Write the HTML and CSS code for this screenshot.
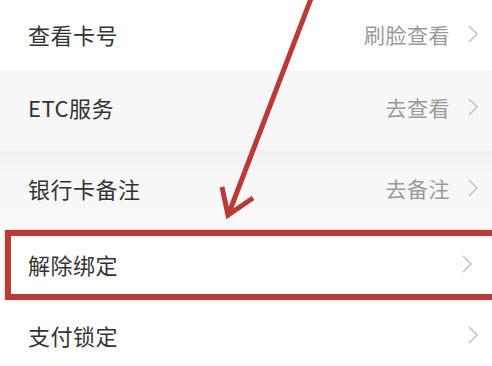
FILE: index.html
```html
<!DOCTYPE html>
<html lang="zh">
<head>
<meta charset="utf-8">
<link rel="stylesheet" href="styles.css">
</head>
<body>
<div class="screen">
  <ul class="menu">
    <li class="row row-1">
      <span class="label">查看卡号</span>
      <span class="action">刷脸查看</span>
      <svg class="chev" viewBox="0 0 12 20"><polyline points="2,2 10,10 2,18"/></svg>
    </li>
    <li class="row row-2 shaded">
      <span class="label">ETC服务</span>
      <span class="action">去查看</span>
      <svg class="chev" viewBox="0 0 12 20"><polyline points="2,2 10,10 2,18"/></svg>
    </li>
    <li class="row row-3 shaded">
      <span class="label">银行卡备注</span>
      <span class="action">去备注</span>
      <svg class="chev" viewBox="0 0 12 20"><polyline points="2,2 10,10 2,18"/></svg>
    </li>
    <li class="row row-4 highlighted">
      <span class="label">解除绑定</span>
      <span class="action"></span>
      <svg class="chev" viewBox="0 0 12 20"><polyline points="2,2 10,10 2,18"/></svg>
    </li>
    <li class="row row-5">
      <span class="label">支付锁定</span>
      <span class="action"></span>
      <svg class="chev" viewBox="0 0 12 20"><polyline points="2,2 10,10 2,18"/></svg>
    </li>
  </ul>
  <svg class="annotation" viewBox="0 0 492 366" width="492" height="366">
    <line x1="312" y1="-4" x2="229" y2="213" />
    <polyline points="222,187 228,215 253,198" />
  </svg>
</div>
</body>
</html>
```
FILE: styles.css
```css
html, body {
  margin: 0;
  padding: 0;
  background: #ffffff;
}
body {
  width: 492px;
  height: 366px;
  overflow: hidden;
  font-family: "Noto Sans CJK SC", "Noto Sans", sans-serif;
}
.screen {
  position: relative;
  width: 492px;
  height: 366px;
  overflow: hidden;
}
.menu {
  list-style: none;
  margin: 0;
  padding: 0;
  display: flex;
  flex-direction: column;
}
.row {
  display: flex;
  align-items: center;
  box-sizing: border-box;
  padding: 0 13px 0 28px;
  background: #ffffff;
}
.row-1 { height: 71px; padding-bottom: 4px; }
.row-2 { height: 79px; padding-bottom: 8px; }
.row-3 { height: 78px; padding-bottom: 2px; }
.row-4 { height: 72px; }
.row-5 { height: 70px; }
.shaded {
  background: #f7f7f7;
}
.row-3 {
  background: linear-gradient(#f1f1f1 0, #f7f7f7 22px, #f9f9f9 100%);
}
.highlighted {
  margin: 2px 0 0 5px;
  width: 510px;
  height: 70px;
  border: 6px solid #b93c36;
  box-shadow: 0 0 2px rgba(185, 60, 54, 0.5);
  padding-left: 17px;
  padding-right: 36px;
  padding-bottom: 2px;
  background: #ffffff;
}
.label {
  font-size: 22px;
  color: #333333;
  flex: 1;
  letter-spacing: 0.5px;
}
.action {
  font-size: 21px;
  color: #9a9a9a;
  margin-right: 17px;
  letter-spacing: 0.5px;
}
.chev {
  width: 12px;
  height: 20px;
  flex: none;
}
.chev polyline {
  fill: none;
  stroke: #c4c4c4;
  stroke-width: 1.6;
  stroke-linejoin: miter;
}
.annotation {
  position: absolute;
  top: 0;
  left: 0;
  pointer-events: none;
}
.annotation line,
.annotation polyline {
  fill: none;
  stroke: #bb3a33;
  stroke-width: 5;
  stroke-linecap: butt;
  stroke-linejoin: miter;
}
```
